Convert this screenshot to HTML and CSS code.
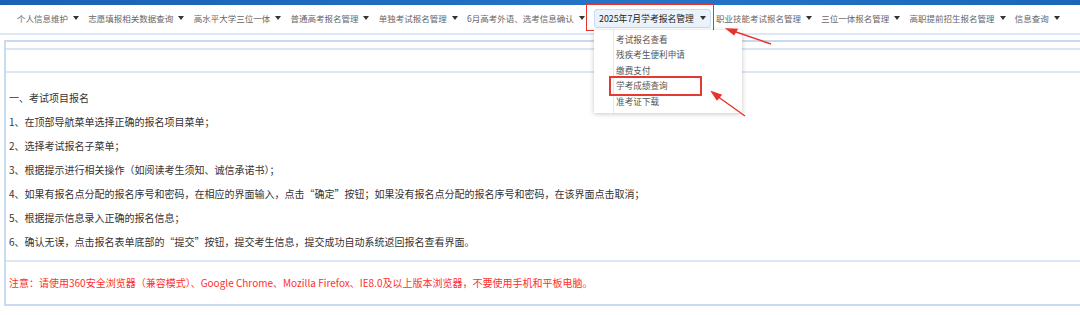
FILE: index.html
```html
<!DOCTYPE html>
<html lang="zh-CN">
<head>
  <meta charset="UTF-8">
  <title>考试报名</title>
  <link rel="stylesheet" href="styles.css">
</head>
<body>
  <div class="topbar"></div>
  <!-- 顶部导航菜单 -->
  <ul class="nav">
    <li>个人信息维护<i class="caret"></i></li>
    <li>志愿填报相关数据查询<i class="caret"></i></li>
    <li>高水平大学三位一体<i class="caret"></i></li>
    <li>普通高考报名管理<i class="caret"></i></li>
    <li>单独考试报名管理<i class="caret"></i></li>
    <li>6月高考外语、选考信息确认<i class="caret"></i></li>
    <li class="active">
      2025年7月学考报名管理<i class="caret"></i>
      <ul class="dropdown">
        <li>考试报名查看</li>
        <li>残疾考生便利申请</li>
        <li>缴费支付</li>
        <li class="marked">学考成绩查询<span class="mark"></span></li>
        <li>准考证下载</li>
      </ul>
    </li>
    <li>职业技能考试报名管理<i class="caret"></i></li>
    <li>三位一体报名管理<i class="caret"></i></li>
    <li>高职提前招生报名管理<i class="caret"></i></li>
    <li>信息查询<i class="caret"></i></li>
  </ul>

  <div class="panel">
    <div class="panel-head"></div>
    <div class="panel-title"></div>
    <div class="panel-body">
      <p>一、考试项目报名</p>
      <p>1、在顶部导航菜单选择正确的报名项目菜单；</p>
      <p>2、选择考试报名子菜单；</p>
      <p>3、根据提示进行相关操作（如阅读考生须知、诚信承诺书）；</p>
      <p>4、如果有报名点分配的报名序号和密码，在相应的界面输入，点击“确定”按钮；如果没有报名点分配的报名序号和密码，在该界面点击取消；</p>
      <p>5、根据提示信息录入正确的报名信息；</p>
      <p>6、确认无误，点击报名表单底部的“提交”按钮，提交考生信息，提交成功自动系统返回报名查看界面。</p>
    </div>
    <div class="panel-note">注意：请使用360安全浏览器（兼容模式）、Google Chrome、Mozilla Firefox、IE8.0及以上版本浏览器，不要使用手机和平板电脑。</div>
  </div>

  <!-- 标注箭头 -->
  <svg class="arrows" width="1080" height="315" viewBox="0 0 1080 315">
    <g stroke="#e8322b" stroke-width="1.4" fill="#e8322b">
      <line x1="771" y1="44" x2="733" y2="31"/>
      <polygon points="727,29 737,29.5 734,34.5"/>
      <line x1="745" y1="116" x2="717" y2="96"/>
      <polygon points="712,92 721,95 717,99.5"/>
    </g>
  </svg>
</body>
</html>
```
FILE: styles.css
```css
/* 基本重置 */
* { margin: 0; padding: 0; box-sizing: border-box; }
body {
  font-family: "Noto Sans CJK SC", "Open Sans", sans-serif;
  background: #fff;
  color: #333;
  width: 1080px;
  height: 315px;
  overflow: hidden;
  position: relative;
}
.topbar {
  height: 5px;
  background: linear-gradient(90deg, #1a62b4, #2574c8 60%, #1b66b9);
}
/* 导航 */
.nav {
  list-style: none;
  display: flex;
  align-items: center;
  height: 30px;
  padding: 0 0 2px 17px;
  border-bottom: 2px solid #dde8f5;
  font-size: 8.5px;
  color: #666;
  white-space: nowrap;
}
.nav > li {
  display: flex;
  align-items: center;
  margin-right: 9.3px;
}
.caret {
  display: inline-block;
  width: 0;
  height: 0;
  margin-left: 5px;
  border-left: 3px solid transparent;
  border-right: 3px solid transparent;
  border-top: 4px solid #333;
}
.nav > li.active {
  position: relative;
  height: 19px;
  padding: 0 4px;
  margin: 0 5px 0 0;
  font-size: 8.8px;
  color: #222;
  background: #eaf2fb;
  border: 1px solid #c9dcf1;
  border-radius: 3px;
}
.nav > li.active .caret { margin-left: 6px; }
/* 外框红色标注 */
.nav > li.active::after {
  content: "";
  position: absolute;
  left: -9px;
  top: -6px;
  right: -4px;
  bottom: -4px;
  border: 1.5px solid #e8322b;
}
.dropdown {
  list-style: none;
  position: absolute;
  left: -1px;
  top: 20px;
  width: 148px;
  padding: 2px 0 4px 0;
  background: #fff;
  box-shadow: 0 1px 5px rgba(0,0,0,0.22);
  font-size: 8.6px;
  color: #555;
  z-index: 10;
}
.dropdown::before {
  content: "";
  position: absolute;
  left: 19px;
  top: 0;
  bottom: 0;
  border-left: 1px solid #e6e6e6;
}
.dropdown li {
  position: relative;
  height: 15.6px;
  line-height: 15.6px;
  padding-left: 22px;
}
.mark {
  position: absolute;
  left: 15px;
  top: -2px;
  width: 93px;
  height: 20px;
  border: 2px solid #e53a33;
}
/* 内容面板 */
.panel {
  margin: 5px -10px 0 4px;
  border-left: 2px solid #c9dbee;
  border-top: 2px solid #c8daee;
  border-bottom: 2px solid #c9dbee;
}
.panel-head {
  height: 8px;
  border-bottom: 2px solid #dbe6f3;
}
.panel-title {
  height: 23px;
  border-bottom: 2px solid #dde8f4;
}
.panel-body {
  padding: 13px 0 6px 3px;
  font-size: 10px;
  color: #333;
}
.panel-body p {
  line-height: 24px;
}
.panel-note {
  border-top: 2px solid #dbe7f4;
  padding: 10px 0 0 3px;
  height: 44px;
  line-height: 22px;
  font-size: 10px;
  color: #ff2e2e;
}
.arrows {
  position: absolute;
  left: 0;
  top: 0;
  pointer-events: none;
  z-index: 20;
}
```
